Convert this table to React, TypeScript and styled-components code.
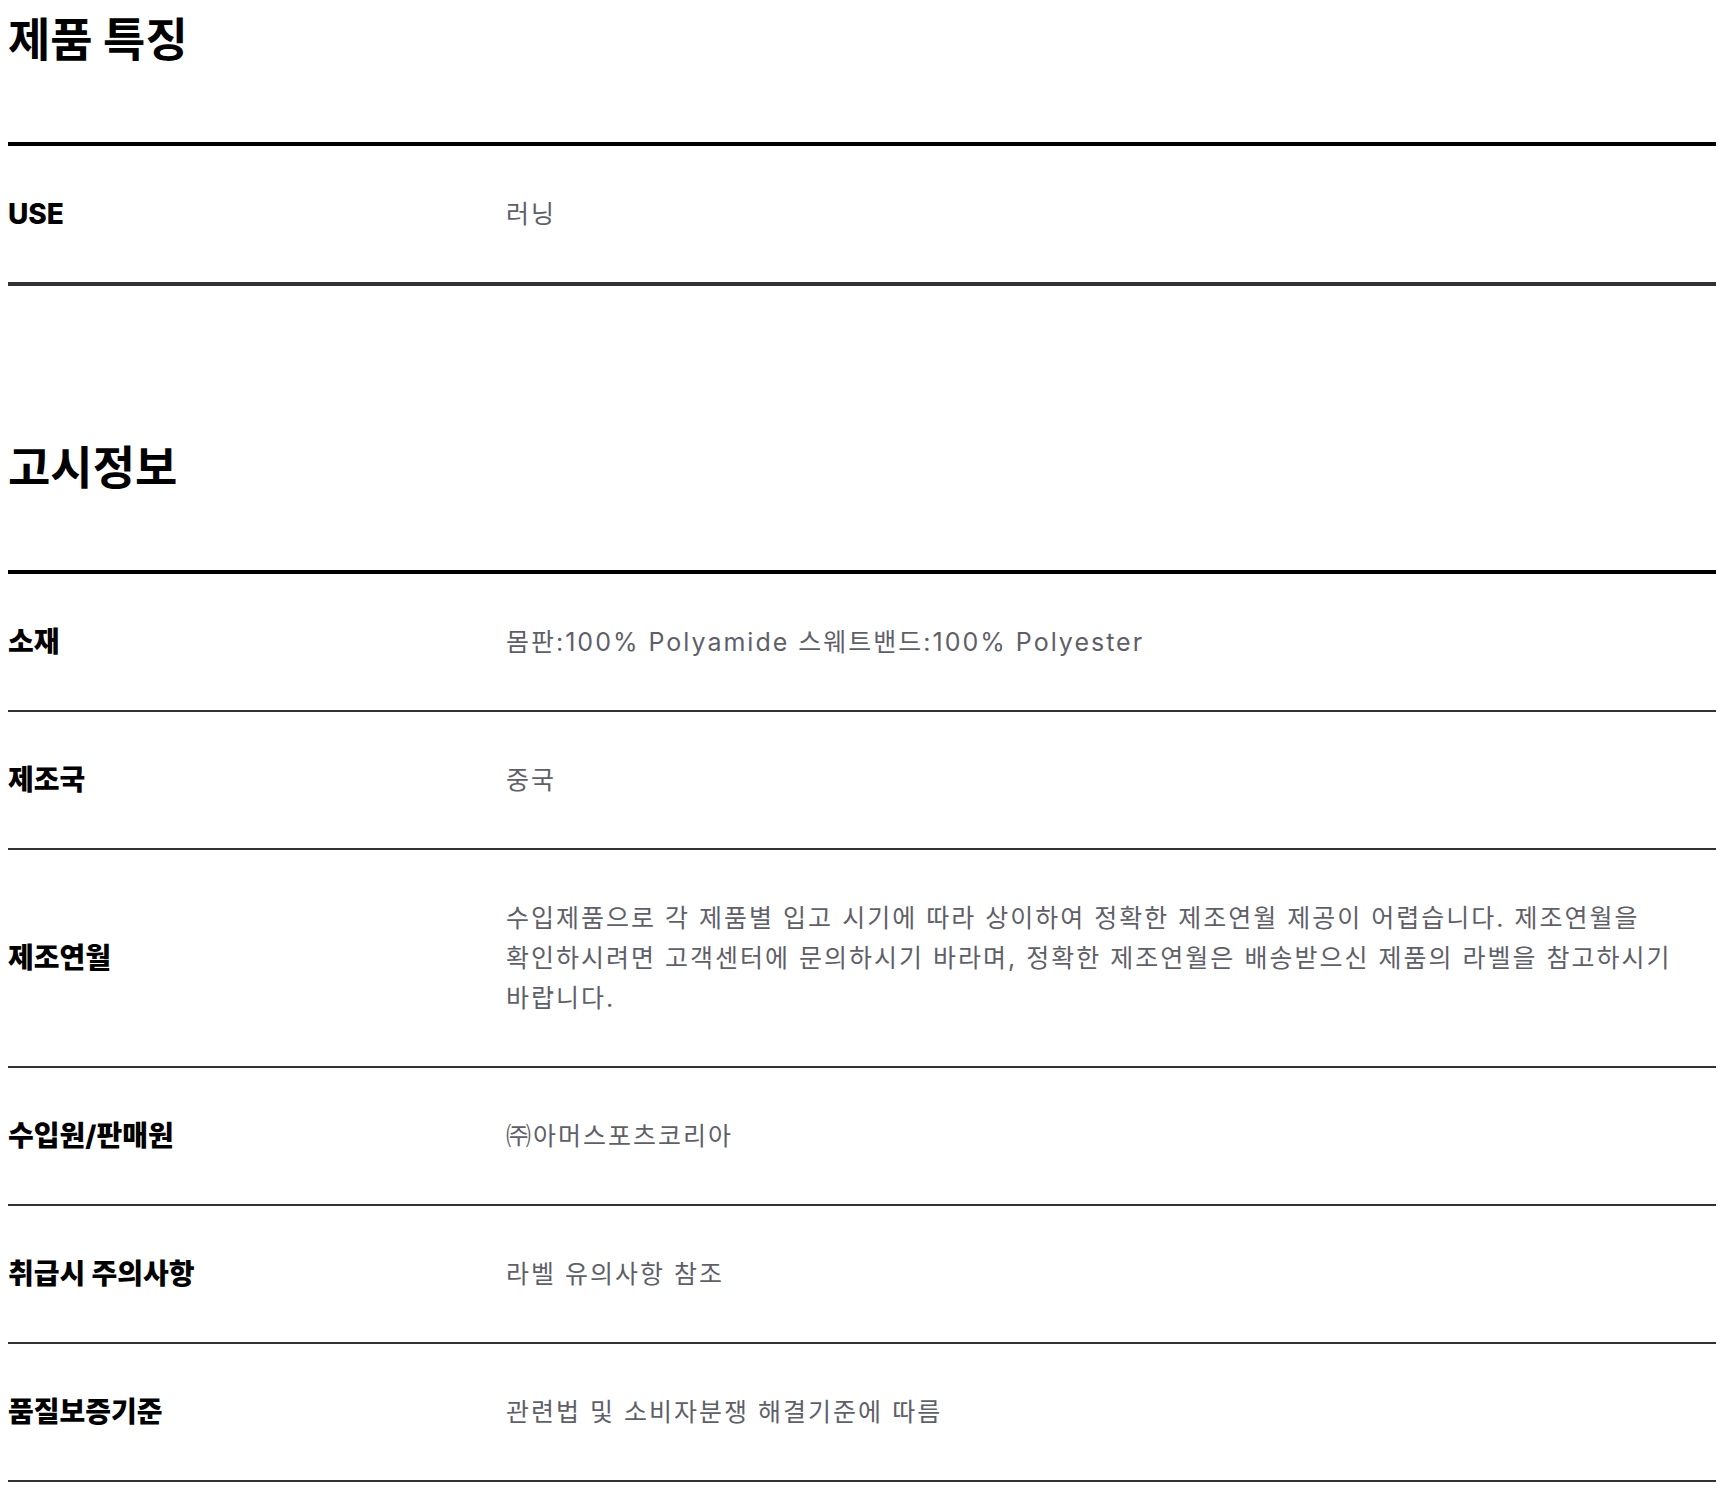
import React from "react";
import styled, { createGlobalStyle } from "styled-components";

const GlobalStyle = createGlobalStyle`
  body {
    margin: 8px;
    background: #ffffff;
    font-family: "Inter", "Noto Sans CJK KR", sans-serif;
    color: #000;
  }
`;

const Section = styled.section<{ $spaced?: boolean }>`
  margin-top: ${(p) => (p.$spaced ? "150px" : "0")};
`;

const Heading = styled.h2`
  margin: 0;
  padding: 2px 0 79px;
  font-family: "Noto Sans CJK KR", sans-serif;
  font-size: 46px;
  line-height: 53px;
  font-weight: 700;
  color: #000;
`;

const InfoList = styled.dl`
  margin: 0;
  border-top: 4px solid #000;
`;

const InfoRow = styled.div<{ $heavy?: boolean }>`
  display: grid;
  grid-template-columns: 498px 1fr;
  align-items: center;
  padding: 48px 0;
  border-bottom: ${(p) => (p.$heavy ? "4px" : "2px")} solid #323137;
`;

const Label = styled.dt`
  margin: 0;
  font-size: 28px;
  line-height: 40px;
  font-weight: 800;
  color: #000;
`;

const Value = styled.dd`
  margin: 0;
  font-size: 25px;
  line-height: 40px;
  font-weight: 400;
  letter-spacing: 2px;
  word-break: keep-all;
  color: #5f5f69;
`;

interface Item {
  label: string;
  value: string;
}

const features: Item[] = [{ label: "USE", value: "러닝" }];

const notices: Item[] = [
  { label: "소재", value: "몸판:100% Polyamide 스웨트밴드:100% Polyester" },
  { label: "제조국", value: "중국" },
  {
    label: "제조연월",
    value:
      "수입제품으로 각 제품별 입고 시기에 따라 상이하여 정확한 제조연월 제공이 어렵습니다. 제조연월을 확인하시려면 고객센터에 문의하시기 바라며, 정확한 제조연월은 배송받으신 제품의 라벨을 참고하시기 바랍니다.",
  },
  { label: "수입원/판매원", value: "㈜아머스포츠코리아" },
  { label: "취급시 주의사항", value: "라벨 유의사항 참조" },
  { label: "품질보증기준", value: "관련법 및 소비자분쟁 해결기준에 따름" },
];

const App = () => {
  return (
    <>
      <GlobalStyle />
      <Section>
        <Heading>제품 특징</Heading>
        <InfoList>
          {features.map((item) => (
            <InfoRow key={item.label} $heavy>
              <Label>{item.label}</Label>
              <Value>{item.value}</Value>
            </InfoRow>
          ))}
        </InfoList>
      </Section>

      <Section $spaced>
        <Heading>고시정보</Heading>
        <InfoList>
          {notices.map((item) => (
            <InfoRow key={item.label}>
              <Label>{item.label}</Label>
              <Value>{item.value}</Value>
            </InfoRow>
          ))}
        </InfoList>
      </Section>
    </>
  );
};

export default App;
